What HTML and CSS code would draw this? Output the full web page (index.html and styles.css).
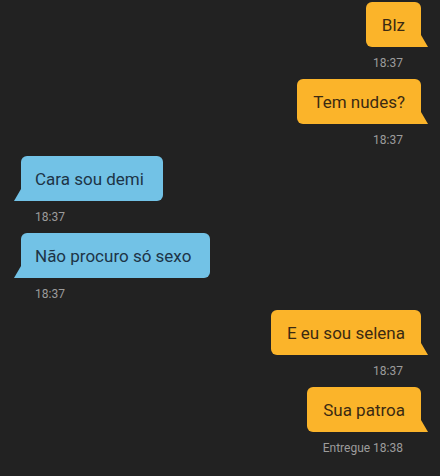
FILE: index.html
```html
<!DOCTYPE html>
<html>
<head>
<meta charset="utf-8">
<link rel="stylesheet" href="styles.css">
</head>
<body>
<div class="chat">
  <div class="msg out">
    <div class="bubble">Blz</div>
    <div class="time">18:37</div>
  </div>
  <div class="msg out">
    <div class="bubble">Tem nudes?</div>
    <div class="time">18:37</div>
  </div>
  <div class="msg in">
    <div class="bubble">Cara sou demi</div>
    <div class="time">18:37</div>
  </div>
  <div class="msg in">
    <div class="bubble">Não procuro só sexo</div>
    <div class="time">18:37</div>
  </div>
  <div class="msg out">
    <div class="bubble">E eu sou selena</div>
    <div class="time">18:37</div>
  </div>
  <div class="msg out">
    <div class="bubble">Sua patroa</div>
    <div class="time">Entregue 18:38</div>
  </div>
</div>
</body>
</html>
```

FILE: styles.css
```css
html, body {
  margin: 0;
  padding: 0;
  background: #222222;
  height: 100%;
}
body {
  font-family: Roboto, "Liberation Sans", sans-serif;
}
.chat {
  display: flex;
  flex-direction: column;
  gap: 8px;
  padding: 2px 19px 0 21px;
}
.msg {
  display: flex;
  flex-direction: column;
  gap: 8px;
}
.msg.out { align-items: flex-end; }
.msg.in { align-items: flex-start; }
.bubble {
  position: relative;
  height: 45px;
  box-sizing: border-box;
  display: flex;
  align-items: center;
  padding: 0 16px;
  font-size: 17px;
  border-radius: 6px;
}
.out .bubble {
  background: #fbb42a;
  color: #3b2a12;
  border-bottom-right-radius: 0;
}
.in .bubble {
  background: #72c2e6;
  color: #1d3447;
  border-bottom-left-radius: 0;
  padding: 0 19px 0 14px;
}
.bubble::after {
  content: "";
  position: absolute;
  bottom: 0;
  width: 7px;
  height: 12px;
}
.out .bubble::after {
  right: -7px;
  background: #fbb42a;
  clip-path: polygon(0 0, 100% 100%, 0 100%);
}
.in .bubble::after {
  left: -7px;
  background: #72c2e6;
  clip-path: polygon(100% 0, 100% 100%, 0 100%);
}
.time {
  font-size: 12px;
  line-height: 16px;
  color: #9c9c9c;
}
.out .time { margin-right: 18px; }
.in .time { margin-left: 14px; }
```
